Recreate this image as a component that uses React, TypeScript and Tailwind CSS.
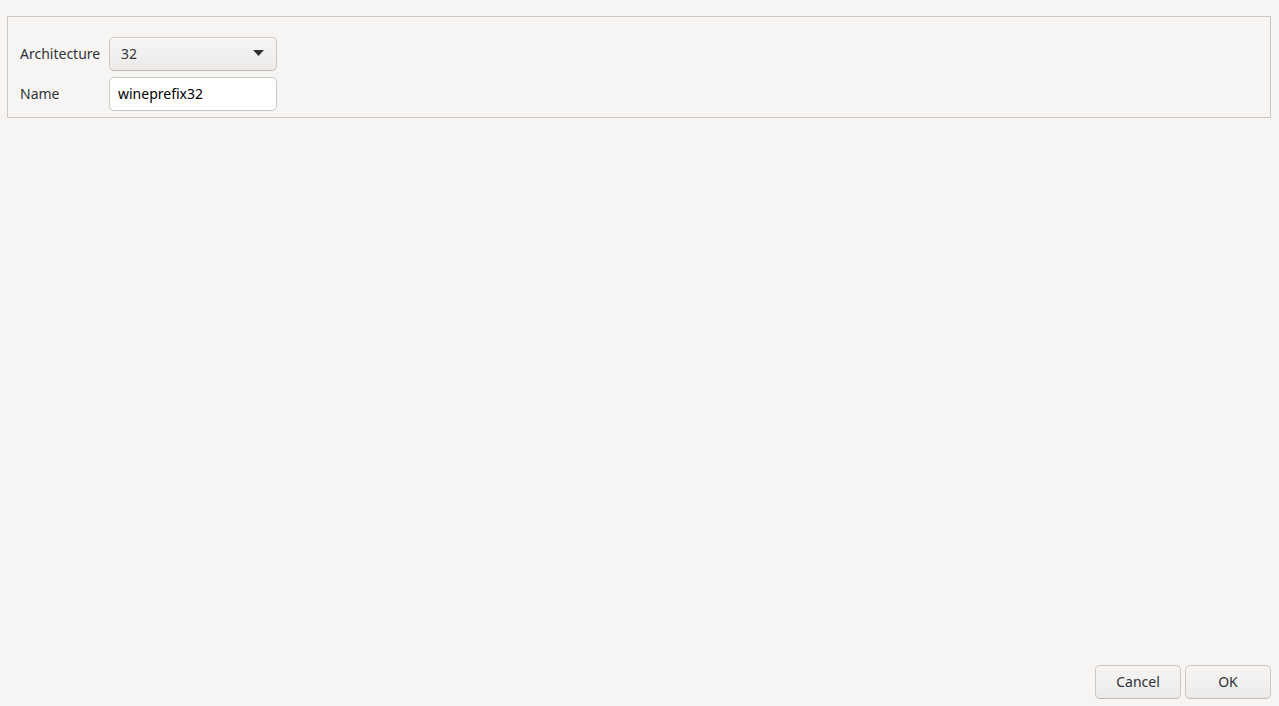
import React, { useState } from 'react';

export default function App() {
  const [arch] = useState('32');
  const [name, setName] = useState('wineprefix32');

  return (
    <div
      className="flex h-[706px] w-full flex-col bg-[#f6f5f4] text-[14px] text-[#2e3436]"
      style={{ fontFamily: '"Noto Sans", "Open Sans", sans-serif' }}
    >
      {/* Settings frame */}
      <div className="ml-[7px] mr-[8px] mt-[16px] border border-[#cdc7c2] pb-[6px] pl-[12px] pr-[12px] pt-[20px]">
        <div className="grid grid-cols-[89px_168px] gap-y-[6px]">
          <div className="flex h-[34px] items-center pb-[2px]">Architecture</div>
          <button className="flex h-[34px] items-center justify-between rounded-[5px] border border-[#cdc7c2] border-b-[#bfb8b1] bg-gradient-to-b from-[#f6f5f4] to-[#edebe9] pb-[2px] pl-[11px] pr-[12px] text-[#2e3436] shadow-[inset_0_1px_0_#ffffff]">
            <span>{arch}</span>
            <svg width="11" height="6" viewBox="0 0 11 6">
              <path d="M0 0 L11 0 L5.5 6 Z" fill="#2e3436" />
            </svg>
          </button>
          <div className="flex h-[34px] items-center pb-[2px]">Name</div>
          <input
            value={name}
            onChange={(e) => setName(e.target.value)}
            className="h-[34px] rounded-[5px] border border-[#cdc7c2] bg-white px-[8px] pb-[2px] text-[#000000] outline-none"
          />
        </div>
      </div>

      <div className="flex-1" />

      {/* Dialog buttons */}
      <div className="mb-[7px] mr-[8px] flex justify-end gap-[4px]">
        <button className="h-[34px] w-[86px] rounded-[5px] border border-[#cdc7c2] border-b-[#bfb8b1] bg-gradient-to-b from-[#f6f5f4] to-[#edebe9] pb-[2px] text-[#2e3436]">
          Cancel
        </button>
        <button className="h-[34px] w-[86px] rounded-[5px] border border-[#cdc7c2] border-b-[#bfb8b1] bg-gradient-to-b from-[#f6f5f4] to-[#edebe9] pb-[2px] text-[#2e3436]">
          OK
        </button>
      </div>
    </div>
  );
}
